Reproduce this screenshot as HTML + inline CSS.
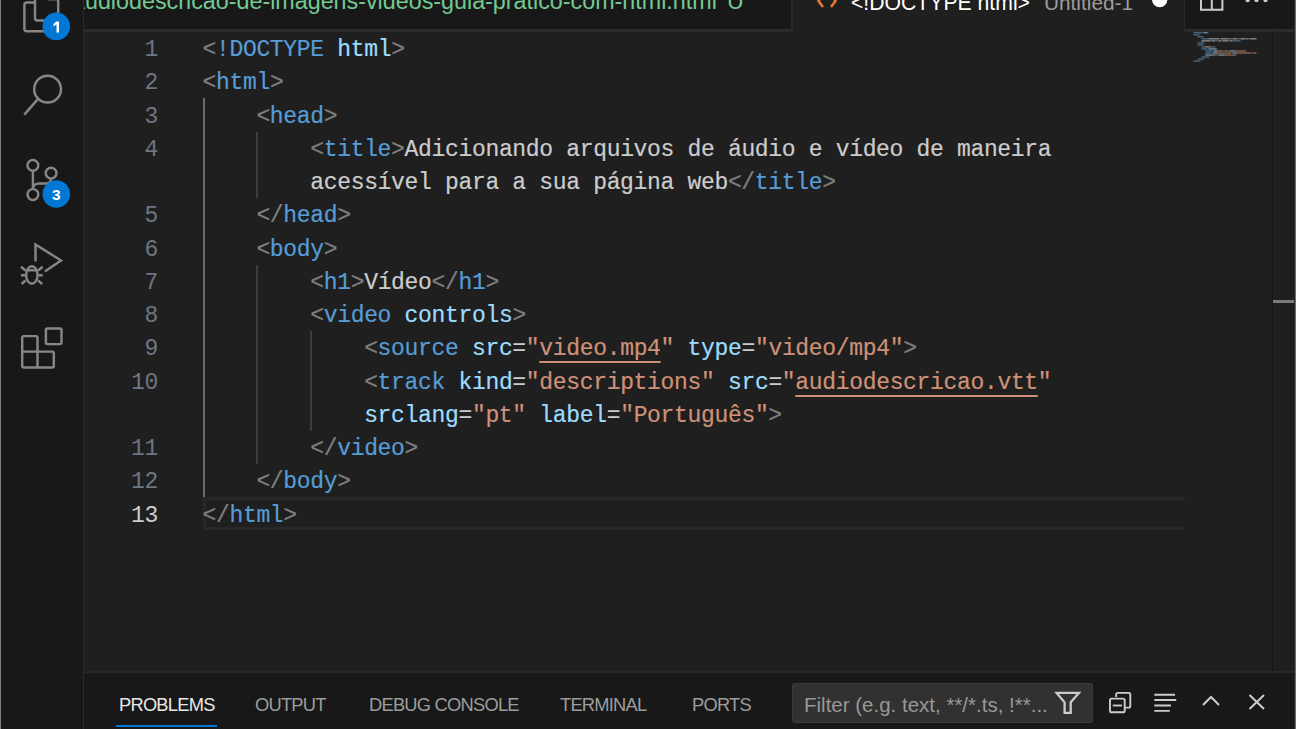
<!DOCTYPE html>
<html>
<head>
<meta charset="utf-8">
<style>
html,body{margin:0;padding:0;}
body{width:1296px;height:729px;overflow:hidden;position:relative;background:#1f1f1f;font-family:"Liberation Sans",sans-serif;}
div{position:absolute;box-sizing:border-box;}
#winL{left:0;top:0;width:1px;height:729px;background:#7f7f7f;}
#winL2{left:1px;top:0;width:1px;height:729px;background:#141414;}
#winR{left:1295px;top:0;width:1px;height:729px;background:#6b6b6b;}
#winR2{left:1294px;top:0;width:1px;height:729px;background:#2a2a2a;}
#act{left:2px;top:0;width:81px;height:729px;background:#181818;}
#actB{left:83px;top:0;width:1px;height:729px;background:#2b2b2b;}
/* tabs */
#tab1{left:84px;top:0;width:707px;height:29px;background:#181818;overflow:hidden;}
#tab1B{left:84px;top:29px;width:709px;height:2.5px;background:#2b2b2b;}
#tab1R{left:791px;top:0;width:2px;height:31px;background:#2b2b2b;}
#actions{left:1184px;top:0;width:110px;height:29px;background:#181818;}
#actionsL{left:1183.5px;top:0;width:1.5px;height:31.5px;background:#2b2b2b;}
#actionsB{left:1184px;top:29px;width:110px;height:2.5px;background:#2b2b2b;}
.tabtxt{white-space:pre;font-size:23.3px;line-height:23px;top:-10.3px !important;}
/* editor */
.ln{white-space:pre;font-family:"Liberation Mono",monospace;font-size:23px;letter-spacing:-0.33px;line-height:33.25px;height:33.25px;-webkit-text-stroke:0.2px currentColor;}
.num{left:84px;width:74px;text-align:right;white-space:pre;font-family:"Liberation Mono",monospace;font-size:23px;letter-spacing:-0.33px;line-height:33.25px;color:#6e7681;}
.num.cur{color:#cccccc;}
.b{color:#808080}.t{color:#569cd6}.a{color:#9cdcfe}.s{color:#ce9178}.x{color:#cccccc}
.u{color:#ce9178;text-decoration:underline;text-decoration-thickness:2px;text-underline-offset:6px;}
.guide{width:2px;background:#3d3d3d;}
.guide.act{background:#6b6b6b;}
#curline{left:202.5px;top:497px;width:982px;height:33px;border-top:3px solid #282828;border-bottom:3px solid #282828;border-left:3px solid #282828;}
#mm div{height:1.3px;opacity:0.6;}
#sbShadow{left:1272px;top:31px;width:1px;height:640px;background:#131313;}
#sbMark{left:1273px;top:300px;width:21.5px;height:3px;background:#7a7a7a;}
/* panel */
#panelB{left:84px;top:671px;width:1210px;height:2px;background:#282828;}
#panel{left:84px;top:673px;width:1210px;height:56px;background:#181818;}
.ptab{top:693.5px;white-space:pre;font-size:18.3px;letter-spacing:-0.75px;line-height:22px;color:#9d9d9d;}
.ptab.on{color:#e7e7e7;}
#pUnder{left:115.7px;top:725.4px;width:101px;height:1.75px;background:#0078d4;}
#filter{left:792px;top:683px;width:301px;height:40px;background:#313131;border:1px solid #3c3c3c;border-radius:3px;}
#filterTxt{left:804px;top:693px;white-space:pre;font-size:20.5px;line-height:24px;color:#989898;}
svg{position:absolute;left:0;top:0;}
</style>
</head>
<body>
<div id="winL"></div><div id="winL2"></div>
<div id="act"></div><div id="actB"></div>
<div id="tab1"><div class="tabtxt" style="left:-12px;top:-14px;color:#73c991">audiodescricao-de-imagens-videos-guia-pratico-com-html.html</div><div class="tabtxt" style="left:643px;top:-14px;color:#73c991">U</div></div>
<div id="tab1B"></div><div id="tab1R"></div>
<div class="tabtxt" style="left:851px;top:-14px;color:#ffffff;font-size:21.2px;margin-top:1px">&lt;!DOCTYPE html&gt;</div>
<div class="tabtxt" style="left:1044px;top:-14px;color:#9d9d9d;font-size:20.8px;margin-top:1px">Untitled-1</div>
<div id="actions"></div><div id="actionsL"></div><div id="actionsB"></div>

<div id="curline"></div>
<div class="guide act" style="left:203px;top:98.30px;height:399.00px"></div>
<div class="guide" style="left:256px;top:131.55px;height:66.50px"></div>
<div class="guide" style="left:256px;top:264.55px;height:199.50px"></div>
<div class="guide" style="left:310px;top:331.05px;height:99.75px"></div>
<div class="num" style="top:34.10px">1</div>
<div class="num" style="top:67.35px">2</div>
<div class="num" style="top:100.60px">3</div>
<div class="num" style="top:133.85px">4</div>
<div class="num" style="top:200.35px">5</div>
<div class="num" style="top:233.60px">6</div>
<div class="num" style="top:266.85px">7</div>
<div class="num" style="top:300.10px">8</div>
<div class="num" style="top:333.35px">9</div>
<div class="num" style="top:366.60px">10</div>
<div class="num" style="top:433.10px">11</div>
<div class="num" style="top:466.35px">12</div>
<div class="num cur" style="top:499.60px">13</div>
<div class="ln" style="top:34.10px;left:202.50px"><span class="b">&lt;</span><span class="t">!DOCTYPE</span><span class="x"> </span><span class="a">html</span><span class="b">&gt;</span></div>
<div class="ln" style="top:67.35px;left:202.50px"><span class="b">&lt;</span><span class="t">html</span><span class="b">&gt;</span></div>
<div class="ln" style="top:100.60px;left:256.38px"><span class="b">&lt;</span><span class="t">head</span><span class="b">&gt;</span></div>
<div class="ln" style="top:133.85px;left:310.26px"><span class="b">&lt;</span><span class="t">title</span><span class="b">&gt;</span><span class="x">Adicionando arquivos de áudio e vídeo de maneira</span></div>
<div class="ln" style="top:167.10px;left:310.26px"><span class="x">acessível para a sua página web</span><span class="b">&lt;/</span><span class="t">title</span><span class="b">&gt;</span></div>
<div class="ln" style="top:200.35px;left:256.38px"><span class="b">&lt;/</span><span class="t">head</span><span class="b">&gt;</span></div>
<div class="ln" style="top:233.60px;left:256.38px"><span class="b">&lt;</span><span class="t">body</span><span class="b">&gt;</span></div>
<div class="ln" style="top:266.85px;left:310.26px"><span class="b">&lt;</span><span class="t">h1</span><span class="b">&gt;</span><span class="x">Vídeo</span><span class="b">&lt;/</span><span class="t">h1</span><span class="b">&gt;</span></div>
<div class="ln" style="top:300.10px;left:310.26px"><span class="b">&lt;</span><span class="t">video</span><span class="x"> </span><span class="a">controls</span><span class="b">&gt;</span></div>
<div class="ln" style="top:333.35px;left:364.14px"><span class="b">&lt;</span><span class="t">source</span><span class="x"> </span><span class="a">src</span><span class="x">=</span><span class="s">"</span><span class="u">video.mp4</span><span class="s">"</span><span class="x"> </span><span class="a">type</span><span class="x">=</span><span class="s">"video/mp4"</span><span class="b">&gt;</span></div>
<div class="ln" style="top:366.60px;left:364.14px"><span class="b">&lt;</span><span class="t">track</span><span class="x"> </span><span class="a">kind</span><span class="x">=</span><span class="s">"descriptions"</span><span class="x"> </span><span class="a">src</span><span class="x">=</span><span class="s">"</span><span class="u">audiodescricao.vtt</span><span class="s">"</span></div>
<div class="ln" style="top:399.85px;left:364.14px"><span class="a">srclang</span><span class="x">=</span><span class="s">"pt"</span><span class="x"> </span><span class="a">label</span><span class="x">=</span><span class="s">"Português"</span><span class="b">&gt;</span></div>
<div class="ln" style="top:433.10px;left:310.26px"><span class="b">&lt;/</span><span class="t">video</span><span class="b">&gt;</span></div>
<div class="ln" style="top:466.35px;left:256.38px"><span class="b">&lt;/</span><span class="t">body</span><span class="b">&gt;</span></div>
<div class="ln" style="top:499.60px;left:202.50px"><span class="b">&lt;/</span><span class="t">html</span><span class="b">&gt;</span></div>
<svg id="mm" width="1296" height="80" viewBox="0 0 1296 80" style="opacity:0.8">
<rect x="1193.5" y="32.00" width="0.9" height="1.4" fill="#808080"/>
<rect x="1194.5" y="32.00" width="0.9" height="1.4" fill="#569cd6"/>
<rect x="1195.5" y="32.00" width="0.9" height="1.4" fill="#569cd6"/>
<rect x="1196.5" y="32.00" width="0.9" height="1.4" fill="#569cd6"/>
<rect x="1197.5" y="32.00" width="0.9" height="1.4" fill="#569cd6"/>
<rect x="1198.5" y="32.00" width="0.9" height="1.4" fill="#569cd6"/>
<rect x="1199.5" y="32.00" width="0.9" height="1.4" fill="#569cd6"/>
<rect x="1200.5" y="32.00" width="0.9" height="1.4" fill="#569cd6"/>
<rect x="1201.5" y="32.00" width="0.9" height="1.4" fill="#569cd6"/>
<rect x="1203.5" y="32.00" width="0.9" height="1.4" fill="#9cdcfe"/>
<rect x="1204.5" y="32.00" width="0.9" height="1.4" fill="#9cdcfe"/>
<rect x="1205.5" y="32.00" width="0.9" height="1.4" fill="#9cdcfe"/>
<rect x="1206.5" y="32.00" width="0.9" height="1.4" fill="#9cdcfe"/>
<rect x="1207.5" y="32.00" width="0.9" height="1.4" fill="#808080"/>
<rect x="1193.5" y="34.03" width="0.9" height="1.4" fill="#808080"/>
<rect x="1194.5" y="34.03" width="0.9" height="1.4" fill="#569cd6"/>
<rect x="1195.5" y="34.03" width="0.9" height="1.4" fill="#569cd6"/>
<rect x="1196.5" y="34.03" width="0.9" height="1.4" fill="#569cd6"/>
<rect x="1197.5" y="34.03" width="0.9" height="1.4" fill="#569cd6"/>
<rect x="1198.5" y="34.03" width="0.9" height="1.4" fill="#808080"/>
<rect x="1197.5" y="36.06" width="0.9" height="1.4" fill="#808080"/>
<rect x="1198.5" y="36.06" width="0.9" height="1.4" fill="#569cd6"/>
<rect x="1199.5" y="36.06" width="0.9" height="1.4" fill="#569cd6"/>
<rect x="1200.5" y="36.06" width="0.9" height="1.4" fill="#569cd6"/>
<rect x="1201.5" y="36.06" width="0.9" height="1.4" fill="#569cd6"/>
<rect x="1202.5" y="36.06" width="0.9" height="1.4" fill="#808080"/>
<rect x="1201.5" y="38.09" width="0.9" height="1.4" fill="#808080"/>
<rect x="1202.5" y="38.09" width="0.9" height="1.4" fill="#569cd6"/>
<rect x="1203.5" y="38.09" width="0.9" height="1.4" fill="#569cd6"/>
<rect x="1204.5" y="38.09" width="0.9" height="1.4" fill="#569cd6"/>
<rect x="1205.5" y="38.09" width="0.9" height="1.4" fill="#569cd6"/>
<rect x="1206.5" y="38.09" width="0.9" height="1.4" fill="#569cd6"/>
<rect x="1207.5" y="38.09" width="0.9" height="1.4" fill="#808080"/>
<rect x="1208.5" y="38.09" width="0.9" height="1.4" fill="#cccccc"/>
<rect x="1209.5" y="38.09" width="0.9" height="1.4" fill="#cccccc"/>
<rect x="1210.5" y="38.09" width="0.9" height="1.4" fill="#cccccc"/>
<rect x="1211.5" y="38.09" width="0.9" height="1.4" fill="#cccccc"/>
<rect x="1212.5" y="38.09" width="0.9" height="1.4" fill="#cccccc"/>
<rect x="1213.5" y="38.09" width="0.9" height="1.4" fill="#cccccc"/>
<rect x="1214.5" y="38.09" width="0.9" height="1.4" fill="#cccccc"/>
<rect x="1215.5" y="38.09" width="0.9" height="1.4" fill="#cccccc"/>
<rect x="1216.5" y="38.09" width="0.9" height="1.4" fill="#cccccc"/>
<rect x="1217.5" y="38.09" width="0.9" height="1.4" fill="#cccccc"/>
<rect x="1218.5" y="38.09" width="0.9" height="1.4" fill="#cccccc"/>
<rect x="1220.5" y="38.09" width="0.9" height="1.4" fill="#cccccc"/>
<rect x="1221.5" y="38.09" width="0.9" height="1.4" fill="#cccccc"/>
<rect x="1222.5" y="38.09" width="0.9" height="1.4" fill="#cccccc"/>
<rect x="1223.5" y="38.09" width="0.9" height="1.4" fill="#cccccc"/>
<rect x="1224.5" y="38.09" width="0.9" height="1.4" fill="#cccccc"/>
<rect x="1225.5" y="38.09" width="0.9" height="1.4" fill="#cccccc"/>
<rect x="1226.5" y="38.09" width="0.9" height="1.4" fill="#cccccc"/>
<rect x="1227.5" y="38.09" width="0.9" height="1.4" fill="#cccccc"/>
<rect x="1229.5" y="38.09" width="0.9" height="1.4" fill="#cccccc"/>
<rect x="1230.5" y="38.09" width="0.9" height="1.4" fill="#cccccc"/>
<rect x="1232.5" y="38.09" width="0.9" height="1.4" fill="#cccccc"/>
<rect x="1233.5" y="38.09" width="0.9" height="1.4" fill="#cccccc"/>
<rect x="1234.5" y="38.09" width="0.9" height="1.4" fill="#cccccc"/>
<rect x="1235.5" y="38.09" width="0.9" height="1.4" fill="#cccccc"/>
<rect x="1236.5" y="38.09" width="0.9" height="1.4" fill="#cccccc"/>
<rect x="1238.5" y="38.09" width="0.9" height="1.4" fill="#cccccc"/>
<rect x="1240.5" y="38.09" width="0.9" height="1.4" fill="#cccccc"/>
<rect x="1241.5" y="38.09" width="0.9" height="1.4" fill="#cccccc"/>
<rect x="1242.5" y="38.09" width="0.9" height="1.4" fill="#cccccc"/>
<rect x="1243.5" y="38.09" width="0.9" height="1.4" fill="#cccccc"/>
<rect x="1244.5" y="38.09" width="0.9" height="1.4" fill="#cccccc"/>
<rect x="1246.5" y="38.09" width="0.9" height="1.4" fill="#cccccc"/>
<rect x="1247.5" y="38.09" width="0.9" height="1.4" fill="#cccccc"/>
<rect x="1249.5" y="38.09" width="0.9" height="1.4" fill="#cccccc"/>
<rect x="1250.5" y="38.09" width="0.9" height="1.4" fill="#cccccc"/>
<rect x="1251.5" y="38.09" width="0.9" height="1.4" fill="#cccccc"/>
<rect x="1252.5" y="38.09" width="0.9" height="1.4" fill="#cccccc"/>
<rect x="1253.5" y="38.09" width="0.9" height="1.4" fill="#cccccc"/>
<rect x="1254.5" y="38.09" width="0.9" height="1.4" fill="#cccccc"/>
<rect x="1255.5" y="38.09" width="0.9" height="1.4" fill="#cccccc"/>
<rect x="1201.5" y="40.12" width="0.9" height="1.4" fill="#cccccc"/>
<rect x="1202.5" y="40.12" width="0.9" height="1.4" fill="#cccccc"/>
<rect x="1203.5" y="40.12" width="0.9" height="1.4" fill="#cccccc"/>
<rect x="1204.5" y="40.12" width="0.9" height="1.4" fill="#cccccc"/>
<rect x="1205.5" y="40.12" width="0.9" height="1.4" fill="#cccccc"/>
<rect x="1206.5" y="40.12" width="0.9" height="1.4" fill="#cccccc"/>
<rect x="1207.5" y="40.12" width="0.9" height="1.4" fill="#cccccc"/>
<rect x="1208.5" y="40.12" width="0.9" height="1.4" fill="#cccccc"/>
<rect x="1209.5" y="40.12" width="0.9" height="1.4" fill="#cccccc"/>
<rect x="1211.5" y="40.12" width="0.9" height="1.4" fill="#cccccc"/>
<rect x="1212.5" y="40.12" width="0.9" height="1.4" fill="#cccccc"/>
<rect x="1213.5" y="40.12" width="0.9" height="1.4" fill="#cccccc"/>
<rect x="1214.5" y="40.12" width="0.9" height="1.4" fill="#cccccc"/>
<rect x="1216.5" y="40.12" width="0.9" height="1.4" fill="#cccccc"/>
<rect x="1218.5" y="40.12" width="0.9" height="1.4" fill="#cccccc"/>
<rect x="1219.5" y="40.12" width="0.9" height="1.4" fill="#cccccc"/>
<rect x="1220.5" y="40.12" width="0.9" height="1.4" fill="#cccccc"/>
<rect x="1222.5" y="40.12" width="0.9" height="1.4" fill="#cccccc"/>
<rect x="1223.5" y="40.12" width="0.9" height="1.4" fill="#cccccc"/>
<rect x="1224.5" y="40.12" width="0.9" height="1.4" fill="#cccccc"/>
<rect x="1225.5" y="40.12" width="0.9" height="1.4" fill="#cccccc"/>
<rect x="1226.5" y="40.12" width="0.9" height="1.4" fill="#cccccc"/>
<rect x="1227.5" y="40.12" width="0.9" height="1.4" fill="#cccccc"/>
<rect x="1229.5" y="40.12" width="0.9" height="1.4" fill="#cccccc"/>
<rect x="1230.5" y="40.12" width="0.9" height="1.4" fill="#cccccc"/>
<rect x="1231.5" y="40.12" width="0.9" height="1.4" fill="#cccccc"/>
<rect x="1232.5" y="40.12" width="0.9" height="1.4" fill="#808080"/>
<rect x="1233.5" y="40.12" width="0.9" height="1.4" fill="#808080"/>
<rect x="1234.5" y="40.12" width="0.9" height="1.4" fill="#569cd6"/>
<rect x="1235.5" y="40.12" width="0.9" height="1.4" fill="#569cd6"/>
<rect x="1236.5" y="40.12" width="0.9" height="1.4" fill="#569cd6"/>
<rect x="1237.5" y="40.12" width="0.9" height="1.4" fill="#569cd6"/>
<rect x="1238.5" y="40.12" width="0.9" height="1.4" fill="#569cd6"/>
<rect x="1239.5" y="40.12" width="0.9" height="1.4" fill="#808080"/>
<rect x="1197.5" y="42.15" width="0.9" height="1.4" fill="#808080"/>
<rect x="1198.5" y="42.15" width="0.9" height="1.4" fill="#808080"/>
<rect x="1199.5" y="42.15" width="0.9" height="1.4" fill="#569cd6"/>
<rect x="1200.5" y="42.15" width="0.9" height="1.4" fill="#569cd6"/>
<rect x="1201.5" y="42.15" width="0.9" height="1.4" fill="#569cd6"/>
<rect x="1202.5" y="42.15" width="0.9" height="1.4" fill="#569cd6"/>
<rect x="1203.5" y="42.15" width="0.9" height="1.4" fill="#808080"/>
<rect x="1197.5" y="44.18" width="0.9" height="1.4" fill="#808080"/>
<rect x="1198.5" y="44.18" width="0.9" height="1.4" fill="#569cd6"/>
<rect x="1199.5" y="44.18" width="0.9" height="1.4" fill="#569cd6"/>
<rect x="1200.5" y="44.18" width="0.9" height="1.4" fill="#569cd6"/>
<rect x="1201.5" y="44.18" width="0.9" height="1.4" fill="#569cd6"/>
<rect x="1202.5" y="44.18" width="0.9" height="1.4" fill="#808080"/>
<rect x="1201.5" y="46.21" width="0.9" height="1.4" fill="#808080"/>
<rect x="1202.5" y="46.21" width="0.9" height="1.4" fill="#569cd6"/>
<rect x="1203.5" y="46.21" width="0.9" height="1.4" fill="#569cd6"/>
<rect x="1204.5" y="46.21" width="0.9" height="1.4" fill="#808080"/>
<rect x="1205.5" y="46.21" width="0.9" height="1.4" fill="#cccccc"/>
<rect x="1206.5" y="46.21" width="0.9" height="1.4" fill="#cccccc"/>
<rect x="1207.5" y="46.21" width="0.9" height="1.4" fill="#cccccc"/>
<rect x="1208.5" y="46.21" width="0.9" height="1.4" fill="#cccccc"/>
<rect x="1209.5" y="46.21" width="0.9" height="1.4" fill="#cccccc"/>
<rect x="1210.5" y="46.21" width="0.9" height="1.4" fill="#808080"/>
<rect x="1211.5" y="46.21" width="0.9" height="1.4" fill="#808080"/>
<rect x="1212.5" y="46.21" width="0.9" height="1.4" fill="#569cd6"/>
<rect x="1213.5" y="46.21" width="0.9" height="1.4" fill="#569cd6"/>
<rect x="1214.5" y="46.21" width="0.9" height="1.4" fill="#808080"/>
<rect x="1201.5" y="48.24" width="0.9" height="1.4" fill="#808080"/>
<rect x="1202.5" y="48.24" width="0.9" height="1.4" fill="#569cd6"/>
<rect x="1203.5" y="48.24" width="0.9" height="1.4" fill="#569cd6"/>
<rect x="1204.5" y="48.24" width="0.9" height="1.4" fill="#569cd6"/>
<rect x="1205.5" y="48.24" width="0.9" height="1.4" fill="#569cd6"/>
<rect x="1206.5" y="48.24" width="0.9" height="1.4" fill="#569cd6"/>
<rect x="1208.5" y="48.24" width="0.9" height="1.4" fill="#9cdcfe"/>
<rect x="1209.5" y="48.24" width="0.9" height="1.4" fill="#9cdcfe"/>
<rect x="1210.5" y="48.24" width="0.9" height="1.4" fill="#9cdcfe"/>
<rect x="1211.5" y="48.24" width="0.9" height="1.4" fill="#9cdcfe"/>
<rect x="1212.5" y="48.24" width="0.9" height="1.4" fill="#9cdcfe"/>
<rect x="1213.5" y="48.24" width="0.9" height="1.4" fill="#9cdcfe"/>
<rect x="1214.5" y="48.24" width="0.9" height="1.4" fill="#9cdcfe"/>
<rect x="1215.5" y="48.24" width="0.9" height="1.4" fill="#9cdcfe"/>
<rect x="1216.5" y="48.24" width="0.9" height="1.4" fill="#808080"/>
<rect x="1205.5" y="50.27" width="0.9" height="1.4" fill="#808080"/>
<rect x="1206.5" y="50.27" width="0.9" height="1.4" fill="#569cd6"/>
<rect x="1207.5" y="50.27" width="0.9" height="1.4" fill="#569cd6"/>
<rect x="1208.5" y="50.27" width="0.9" height="1.4" fill="#569cd6"/>
<rect x="1209.5" y="50.27" width="0.9" height="1.4" fill="#569cd6"/>
<rect x="1210.5" y="50.27" width="0.9" height="1.4" fill="#569cd6"/>
<rect x="1211.5" y="50.27" width="0.9" height="1.4" fill="#569cd6"/>
<rect x="1213.5" y="50.27" width="0.9" height="1.4" fill="#9cdcfe"/>
<rect x="1214.5" y="50.27" width="0.9" height="1.4" fill="#9cdcfe"/>
<rect x="1215.5" y="50.27" width="0.9" height="1.4" fill="#9cdcfe"/>
<rect x="1216.5" y="50.27" width="0.9" height="1.4" fill="#cccccc"/>
<rect x="1217.5" y="50.27" width="0.9" height="1.4" fill="#ce9178"/>
<rect x="1218.5" y="50.27" width="0.9" height="1.4" fill="#ce9178"/>
<rect x="1219.5" y="50.27" width="0.9" height="1.4" fill="#ce9178"/>
<rect x="1220.5" y="50.27" width="0.9" height="1.4" fill="#ce9178"/>
<rect x="1221.5" y="50.27" width="0.9" height="1.4" fill="#ce9178"/>
<rect x="1222.5" y="50.27" width="0.9" height="1.4" fill="#ce9178"/>
<rect x="1224.5" y="50.27" width="0.9" height="1.4" fill="#ce9178"/>
<rect x="1225.5" y="50.27" width="0.9" height="1.4" fill="#ce9178"/>
<rect x="1226.5" y="50.27" width="0.9" height="1.4" fill="#ce9178"/>
<rect x="1227.5" y="50.27" width="0.9" height="1.4" fill="#ce9178"/>
<rect x="1229.5" y="50.27" width="0.9" height="1.4" fill="#9cdcfe"/>
<rect x="1230.5" y="50.27" width="0.9" height="1.4" fill="#9cdcfe"/>
<rect x="1231.5" y="50.27" width="0.9" height="1.4" fill="#9cdcfe"/>
<rect x="1232.5" y="50.27" width="0.9" height="1.4" fill="#9cdcfe"/>
<rect x="1233.5" y="50.27" width="0.9" height="1.4" fill="#cccccc"/>
<rect x="1234.5" y="50.27" width="0.9" height="1.4" fill="#ce9178"/>
<rect x="1235.5" y="50.27" width="0.9" height="1.4" fill="#ce9178"/>
<rect x="1236.5" y="50.27" width="0.9" height="1.4" fill="#ce9178"/>
<rect x="1237.5" y="50.27" width="0.9" height="1.4" fill="#ce9178"/>
<rect x="1238.5" y="50.27" width="0.9" height="1.4" fill="#ce9178"/>
<rect x="1239.5" y="50.27" width="0.9" height="1.4" fill="#ce9178"/>
<rect x="1240.5" y="50.27" width="0.9" height="1.4" fill="#ce9178"/>
<rect x="1241.5" y="50.27" width="0.9" height="1.4" fill="#ce9178"/>
<rect x="1242.5" y="50.27" width="0.9" height="1.4" fill="#ce9178"/>
<rect x="1243.5" y="50.27" width="0.9" height="1.4" fill="#ce9178"/>
<rect x="1244.5" y="50.27" width="0.9" height="1.4" fill="#ce9178"/>
<rect x="1245.5" y="50.27" width="0.9" height="1.4" fill="#808080"/>
<rect x="1205.5" y="52.30" width="0.9" height="1.4" fill="#808080"/>
<rect x="1206.5" y="52.30" width="0.9" height="1.4" fill="#569cd6"/>
<rect x="1207.5" y="52.30" width="0.9" height="1.4" fill="#569cd6"/>
<rect x="1208.5" y="52.30" width="0.9" height="1.4" fill="#569cd6"/>
<rect x="1209.5" y="52.30" width="0.9" height="1.4" fill="#569cd6"/>
<rect x="1210.5" y="52.30" width="0.9" height="1.4" fill="#569cd6"/>
<rect x="1212.5" y="52.30" width="0.9" height="1.4" fill="#9cdcfe"/>
<rect x="1213.5" y="52.30" width="0.9" height="1.4" fill="#9cdcfe"/>
<rect x="1214.5" y="52.30" width="0.9" height="1.4" fill="#9cdcfe"/>
<rect x="1215.5" y="52.30" width="0.9" height="1.4" fill="#9cdcfe"/>
<rect x="1216.5" y="52.30" width="0.9" height="1.4" fill="#cccccc"/>
<rect x="1217.5" y="52.30" width="0.9" height="1.4" fill="#ce9178"/>
<rect x="1218.5" y="52.30" width="0.9" height="1.4" fill="#ce9178"/>
<rect x="1219.5" y="52.30" width="0.9" height="1.4" fill="#ce9178"/>
<rect x="1220.5" y="52.30" width="0.9" height="1.4" fill="#ce9178"/>
<rect x="1221.5" y="52.30" width="0.9" height="1.4" fill="#ce9178"/>
<rect x="1222.5" y="52.30" width="0.9" height="1.4" fill="#ce9178"/>
<rect x="1223.5" y="52.30" width="0.9" height="1.4" fill="#ce9178"/>
<rect x="1224.5" y="52.30" width="0.9" height="1.4" fill="#ce9178"/>
<rect x="1225.5" y="52.30" width="0.9" height="1.4" fill="#ce9178"/>
<rect x="1226.5" y="52.30" width="0.9" height="1.4" fill="#ce9178"/>
<rect x="1227.5" y="52.30" width="0.9" height="1.4" fill="#ce9178"/>
<rect x="1228.5" y="52.30" width="0.9" height="1.4" fill="#ce9178"/>
<rect x="1229.5" y="52.30" width="0.9" height="1.4" fill="#ce9178"/>
<rect x="1230.5" y="52.30" width="0.9" height="1.4" fill="#ce9178"/>
<rect x="1232.5" y="52.30" width="0.9" height="1.4" fill="#9cdcfe"/>
<rect x="1233.5" y="52.30" width="0.9" height="1.4" fill="#9cdcfe"/>
<rect x="1234.5" y="52.30" width="0.9" height="1.4" fill="#9cdcfe"/>
<rect x="1235.5" y="52.30" width="0.9" height="1.4" fill="#cccccc"/>
<rect x="1236.5" y="52.30" width="0.9" height="1.4" fill="#ce9178"/>
<rect x="1237.5" y="52.30" width="0.9" height="1.4" fill="#ce9178"/>
<rect x="1238.5" y="52.30" width="0.9" height="1.4" fill="#ce9178"/>
<rect x="1239.5" y="52.30" width="0.9" height="1.4" fill="#ce9178"/>
<rect x="1240.5" y="52.30" width="0.9" height="1.4" fill="#ce9178"/>
<rect x="1241.5" y="52.30" width="0.9" height="1.4" fill="#ce9178"/>
<rect x="1242.5" y="52.30" width="0.9" height="1.4" fill="#ce9178"/>
<rect x="1243.5" y="52.30" width="0.9" height="1.4" fill="#ce9178"/>
<rect x="1244.5" y="52.30" width="0.9" height="1.4" fill="#ce9178"/>
<rect x="1245.5" y="52.30" width="0.9" height="1.4" fill="#ce9178"/>
<rect x="1246.5" y="52.30" width="0.9" height="1.4" fill="#ce9178"/>
<rect x="1247.5" y="52.30" width="0.9" height="1.4" fill="#ce9178"/>
<rect x="1248.5" y="52.30" width="0.9" height="1.4" fill="#ce9178"/>
<rect x="1249.5" y="52.30" width="0.9" height="1.4" fill="#ce9178"/>
<rect x="1250.5" y="52.30" width="0.9" height="1.4" fill="#ce9178"/>
<rect x="1252.5" y="52.30" width="0.9" height="1.4" fill="#ce9178"/>
<rect x="1253.5" y="52.30" width="0.9" height="1.4" fill="#ce9178"/>
<rect x="1254.5" y="52.30" width="0.9" height="1.4" fill="#ce9178"/>
<rect x="1255.5" y="52.30" width="0.9" height="1.4" fill="#ce9178"/>
<rect x="1205.5" y="54.33" width="0.9" height="1.4" fill="#9cdcfe"/>
<rect x="1206.5" y="54.33" width="0.9" height="1.4" fill="#9cdcfe"/>
<rect x="1207.5" y="54.33" width="0.9" height="1.4" fill="#9cdcfe"/>
<rect x="1208.5" y="54.33" width="0.9" height="1.4" fill="#9cdcfe"/>
<rect x="1209.5" y="54.33" width="0.9" height="1.4" fill="#9cdcfe"/>
<rect x="1210.5" y="54.33" width="0.9" height="1.4" fill="#9cdcfe"/>
<rect x="1211.5" y="54.33" width="0.9" height="1.4" fill="#9cdcfe"/>
<rect x="1212.5" y="54.33" width="0.9" height="1.4" fill="#cccccc"/>
<rect x="1213.5" y="54.33" width="0.9" height="1.4" fill="#ce9178"/>
<rect x="1214.5" y="54.33" width="0.9" height="1.4" fill="#ce9178"/>
<rect x="1215.5" y="54.33" width="0.9" height="1.4" fill="#ce9178"/>
<rect x="1216.5" y="54.33" width="0.9" height="1.4" fill="#ce9178"/>
<rect x="1218.5" y="54.33" width="0.9" height="1.4" fill="#9cdcfe"/>
<rect x="1219.5" y="54.33" width="0.9" height="1.4" fill="#9cdcfe"/>
<rect x="1220.5" y="54.33" width="0.9" height="1.4" fill="#9cdcfe"/>
<rect x="1221.5" y="54.33" width="0.9" height="1.4" fill="#9cdcfe"/>
<rect x="1222.5" y="54.33" width="0.9" height="1.4" fill="#9cdcfe"/>
<rect x="1223.5" y="54.33" width="0.9" height="1.4" fill="#cccccc"/>
<rect x="1224.5" y="54.33" width="0.9" height="1.4" fill="#ce9178"/>
<rect x="1225.5" y="54.33" width="0.9" height="1.4" fill="#ce9178"/>
<rect x="1226.5" y="54.33" width="0.9" height="1.4" fill="#ce9178"/>
<rect x="1227.5" y="54.33" width="0.9" height="1.4" fill="#ce9178"/>
<rect x="1228.5" y="54.33" width="0.9" height="1.4" fill="#ce9178"/>
<rect x="1229.5" y="54.33" width="0.9" height="1.4" fill="#ce9178"/>
<rect x="1230.5" y="54.33" width="0.9" height="1.4" fill="#ce9178"/>
<rect x="1231.5" y="54.33" width="0.9" height="1.4" fill="#ce9178"/>
<rect x="1232.5" y="54.33" width="0.9" height="1.4" fill="#ce9178"/>
<rect x="1233.5" y="54.33" width="0.9" height="1.4" fill="#ce9178"/>
<rect x="1234.5" y="54.33" width="0.9" height="1.4" fill="#ce9178"/>
<rect x="1235.5" y="54.33" width="0.9" height="1.4" fill="#808080"/>
<rect x="1201.5" y="56.36" width="0.9" height="1.4" fill="#808080"/>
<rect x="1202.5" y="56.36" width="0.9" height="1.4" fill="#808080"/>
<rect x="1203.5" y="56.36" width="0.9" height="1.4" fill="#569cd6"/>
<rect x="1204.5" y="56.36" width="0.9" height="1.4" fill="#569cd6"/>
<rect x="1205.5" y="56.36" width="0.9" height="1.4" fill="#569cd6"/>
<rect x="1206.5" y="56.36" width="0.9" height="1.4" fill="#569cd6"/>
<rect x="1207.5" y="56.36" width="0.9" height="1.4" fill="#569cd6"/>
<rect x="1208.5" y="56.36" width="0.9" height="1.4" fill="#808080"/>
<rect x="1197.5" y="58.39" width="0.9" height="1.4" fill="#808080"/>
<rect x="1198.5" y="58.39" width="0.9" height="1.4" fill="#808080"/>
<rect x="1199.5" y="58.39" width="0.9" height="1.4" fill="#569cd6"/>
<rect x="1200.5" y="58.39" width="0.9" height="1.4" fill="#569cd6"/>
<rect x="1201.5" y="58.39" width="0.9" height="1.4" fill="#569cd6"/>
<rect x="1202.5" y="58.39" width="0.9" height="1.4" fill="#569cd6"/>
<rect x="1203.5" y="58.39" width="0.9" height="1.4" fill="#808080"/>
<rect x="1193.5" y="60.42" width="0.9" height="1.4" fill="#808080"/>
<rect x="1194.5" y="60.42" width="0.9" height="1.4" fill="#808080"/>
<rect x="1195.5" y="60.42" width="0.9" height="1.4" fill="#569cd6"/>
<rect x="1196.5" y="60.42" width="0.9" height="1.4" fill="#569cd6"/>
<rect x="1197.5" y="60.42" width="0.9" height="1.4" fill="#569cd6"/>
<rect x="1198.5" y="60.42" width="0.9" height="1.4" fill="#569cd6"/>
<rect x="1199.5" y="60.42" width="0.9" height="1.4" fill="#808080"/>
</svg>
<div id="sbShadow"></div>
<div id="sbMark"></div>

<div id="panelB"></div><div id="panel"></div>
<div class="ptab on" style="left:119px">PROBLEMS</div>
<div class="ptab" style="left:255px">OUTPUT</div>
<div class="ptab" style="left:369px">DEBUG CONSOLE</div>
<div class="ptab" style="left:560px">TERMINAL</div>
<div class="ptab" style="left:692px">PORTS</div>
<div id="pUnder"></div>
<div id="filter"></div>
<div id="filterTxt">Filter (e.g. text, **/*.ts, !**...</div>

<svg width="1296" height="729" viewBox="0 0 1296 729" fill="none" stroke="#868686" stroke-width="2.45">
 <!-- files -->
 <path d="M34.5,2.4 H26.9 Q24.4,2.4 24.4,4.9 V28.8 Q24.4,31.3 26.9,31.3 H44"/>
 <path d="M35,-2 V17.9 Q35,20.4 37.5,20.4 H55.7 Q58.2,20.4 58.2,17.9 V-2"/>
 <path d="M48,-0.8 H58.2"/>
 <circle cx="56.3" cy="26.4" r="13.8" fill="#0078d4" stroke="none"/>
 <path d="M56.5,21.6 H59 V32.6 H56.5 V24.6 L53.5,26.4 V23.9 Z" fill="#ffffff" stroke="none"/>
 <!-- search -->
 <circle cx="47.6" cy="89.2" r="13.4" stroke-width="2.5"/>
 <path d="M38.3,98.6 L24.3,114.6" stroke-width="2.6"/>
 <!-- scm -->
 <circle cx="32.9" cy="165.4" r="5.4"/>
 <circle cx="51.1" cy="173.1" r="5.4"/>
 <circle cx="32.9" cy="194.5" r="5.4"/>
 <path d="M32.9,170.8 V189.1"/>
 <path d="M51.1,178.5 C51.1,181.8 49,183.4 46,183.4 H39 C35.5,183.4 32.9,185.5 32.9,189"/>
 <circle cx="56.3" cy="194" r="13.8" fill="#0078d4" stroke="none"/>
 <text x="56.3" y="200" fill="#ffffff" stroke="none" font-family="Liberation Sans" font-weight="bold" font-size="15.5" text-anchor="middle">3</text>
 <!-- debug -->
 <path d="M35.5,261.5 V244.5 L61,260.5 L44.8,271.5" stroke-linejoin="miter"/>
 <ellipse cx="31.85" cy="275" rx="5.7" ry="8.7"/>
 <path d="M25.8,270.3 H37.9"/>
 <path d="M21,266.8 L25.5,270.5 M21,275.2 H25.5 M21.5,284 L25.5,280.5 M42.7,266.8 L38.2,270.5 M42.7,275.2 H38.2 M42.2,284 L38.2,280.5"/>
 <!-- extensions -->
 <rect x="45.9" y="328.4" width="15.6" height="15.7" rx="1.5"/>
 <path d="M22.2,351.6 V337.6 Q22.2,336.1 23.7,336.1 H36 Q37.5,336.1 37.5,337.6 V351.6 H52.3 Q53.8,351.6 53.8,353.1 V366 Q53.8,367.5 52.3,367.5 H23.7 Q22.2,367.5 22.2,366 Z M22.2,351.6 H37.5 V367.5"/>
 <!-- tab icons -->
 <path d="M823,-5 L818.5,1 L823,7 M831,-5 L835.5,1 L831,7" stroke="#e37933" stroke-width="2.6"/>
 <circle cx="1159.7" cy="-0.5" r="7.7" fill="#ffffff" stroke="none"/>
 <path d="M1201,-10 V9.7 H1222.4 V-10 M1211.8,-10 V9.7" stroke="#cccccc" stroke-width="2"/>
 <circle cx="1247.6" cy="0" r="2.2" fill="#cccccc" stroke="none"/>
 <circle cx="1256.5" cy="0" r="2.2" fill="#cccccc" stroke="none"/>
 <circle cx="1265.5" cy="0" r="2.2" fill="#cccccc" stroke="none"/>
 <!-- panel icons -->
 <path d="M1056.6,692.9 H1079 L1070.7,702.3 V712.8 H1064.6 V702.3 Z" stroke="#cccccc" stroke-width="2.3" stroke-linejoin="miter"/>
 <path d="M1116.2,697 V694.5 Q1116.2,692.9 1117.8,692.9 H1128.7 Q1130.3,692.9 1130.3,694.5 V706 Q1130.3,707.6 1128.7,707.6 H1125" stroke="#cccccc" stroke-width="1.9"/>
 <rect x="1110" y="698.6" width="14.7" height="13.7" rx="1.6" stroke="#cccccc" stroke-width="1.9"/>
 <path d="M1112.8,705.5 H1122" stroke="#cccccc" stroke-width="1.9"/>
 <path d="M1154.3,694.7 H1175 M1154.3,700 H1176.2 M1154.3,705.5 H1171 M1154.3,710.9 H1169.8" stroke="#cccccc" stroke-width="1.9"/>
 <path d="M1203,705 L1211,697 L1219,705" stroke="#cccccc" stroke-width="2"/>
 <path d="M1249.5,695 L1264,709 M1264,695 L1249.5,709" stroke="#cccccc" stroke-width="2"/>
</svg>
<div id="winR2"></div><div id="winR"></div>
</body>
</html>
